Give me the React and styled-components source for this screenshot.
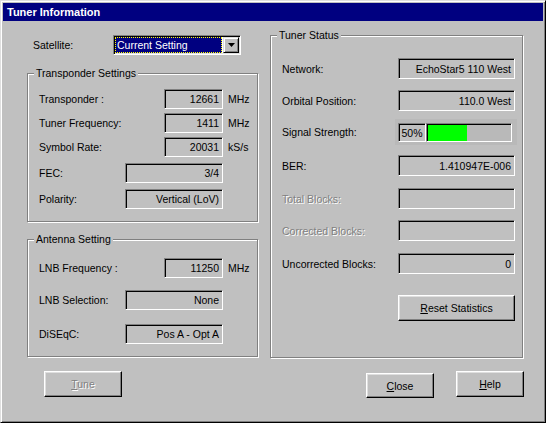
import styled, { createGlobalStyle } from "styled-components";

const GlobalStyle = createGlobalStyle`
  html, body {
    margin: 0;
    padding: 0;
    background: #c0c0c0;
  }
  body {
    font-family: "Liberation Sans", Arial, sans-serif;
    font-size: 10.5px;
    color: #000;
  }
`;

const transponderRows = [
  { label: "Transponder :", value: "12661", unit: "MHz", w: 59, mt: 15 },
  { label: "Tuner Frequency:", value: "1411", unit: "MHz", w: 59, mt: 4 },
  { label: "Symbol Rate:", value: "20031", unit: "kS/s", w: 59, mt: 4 },
  { label: "FEC:", value: "3/4", w: 98, mt: 6 },
  { label: "Polarity:", value: "Vertical (LoV)", w: 98, mt: 6 },
];

const antennaRows = [
  { label: "LNB Frequency :", value: "11250", unit: "MHz", w: 59, mt: 18 },
  { label: "LNB Selection:", value: "None", w: 98, mt: 12 },
  { label: "DiSEqC:", value: "Pos A - Opt A", w: 98, mt: 14 },
];

const Window = styled.div`
  width: 546px;
  height: 423px;
  box-sizing: border-box;
  background: #c0c0c0;
  border: 1px solid;
  border-color: #dfdfdf #000 #000 #dfdfdf;
  box-shadow: inset 1px 1px #fff, inset -1px -1px #808080;
  padding: 2px;
  display: flex;
  flex-direction: column;
`;

const TitleBar = styled.div`
  height: 18px;
  flex-shrink: 0;
  background: #000080;
  color: #fff;
  font-weight: bold;
  font-size: 11px;
  padding-left: 4px;
  display: flex;
  align-items: center;
`;

const Body = styled.div`
  display: flex;
  gap: 12px;
  padding: 14px 0 0 24px;
`;

const Column = styled.div`
  width: ${(p) => p.$w}px;
  display: flex;
  flex-direction: column;
`;

const SatelliteRow = styled.div`
  height: 20px;
  display: flex;
  align-items: center;
  margin-left: 6px;
`;

const SatLabel = styled.span`
  width: 80px;
`;

const Combo = styled.div`
  box-sizing: border-box;
  width: 128px;
  height: 20px;
  border: 1px solid;
  border-color: #808080 #fff #fff #808080;
  box-shadow: inset 1px 1px #000, inset -1px -1px #dfdfdf;
  background: #fff;
  padding: 1px;
  display: flex;
`;

const ComboText = styled.div`
  flex: 1;
  background: #000080;
  color: #fff;
  outline: 1px dotted #ffff00;
  outline-offset: -1px;
  padding-left: 2px;
  display: flex;
  align-items: center;
`;

const ComboButton = styled.div`
  box-sizing: border-box;
  width: 16px;
  height: 16px;
  margin-left: 1px;
  background: #c0c0c0;
  border: 1px solid;
  border-color: #dfdfdf #000 #000 #dfdfdf;
  box-shadow: inset 1px 1px #fff, inset -1px -1px #808080;
  display: flex;
  align-items: center;
  justify-content: center;
`;

const Group = styled.div`
  position: relative;
  box-sizing: border-box;
  height: ${(p) => p.$h}px;
  margin-top: ${(p) => p.$mt || 0}px;
  border: 1px solid #808080;
  box-shadow: inset 1px 1px #fff, 1px 1px #fff;
  padding: 0 ${(p) => p.$pr || 0}px 0 11px;
  display: flex;
  flex-direction: column;
`;

const Legend = styled.span`
  position: absolute;
  top: -7px;
  left: 6px;
  padding: 0 2px;
  line-height: 13px;
  background: #c0c0c0;
`;

const Row = styled.div`
  display: grid;
  grid-template-columns: ${(p) => (p.$unit ? "1fr auto 34px" : "1fr auto")};
  align-items: center;
  margin-top: ${(p) => p.$mt}px;
`;

const Label = styled.span`
  white-space: nowrap;
  color: ${(p) => (p.$disabled ? "#808080" : "#000")};
  text-shadow: ${(p) => (p.$disabled ? "1px 1px #fff" : "none")};
`;

const Unit = styled.span`
  padding-left: 5px;
`;

const Field = styled.div`
  box-sizing: border-box;
  width: ${(p) => p.$w}px;
  height: ${(p) => p.$h || 20}px;
  border: 1px solid;
  border-color: #808080 #fff #fff #808080;
  box-shadow: inset 1px 1px #000;
  padding-right: 3px;
  display: flex;
  align-items: center;
  justify-content: flex-end;
  white-space: nowrap;
`;

const SignalPanel = styled.div`
  justify-self: end;
  margin-right: -2px;
  box-sizing: border-box;
  width: 122px;
  height: 26px;
  background: #b9b9b9;
  padding: 4px 5px 3px 3px;
  display: flex;
`;

const Percent = styled(Field)`
  justify-content: center;
  padding: 0;
  background: #c0c0c0;
`;

const Bar = styled.div`
  box-sizing: border-box;
  flex: 1;
  height: 19px;
  border: 1px solid;
  border-color: #808080 #fff #fff #808080;
  box-shadow: inset 1px 1px #000;
  padding: 1px 0 0 1px;
  display: flex;
`;

const BarFill = styled.div`
  height: 100%;
  background: #00ff00;
`;

const Button = styled.button`
  box-sizing: border-box;
  width: ${(p) => p.$w}px;
  height: ${(p) => p.$h || 26}px;
  margin: ${(p) => p.$mt || 0}px 0 0 ${(p) => p.$ml || 0}px;
  padding: 0;
  background: #c0c0c0;
  border: 1px solid;
  border-color: #fff #000 #000 #fff;
  box-shadow: inset -1px -1px #808080, inset 1px 1px #dfdfdf;
  font: inherit;
  color: #000;

  &:disabled {
    color: #808080;
    text-shadow: 1px 1px #fff;
  }
`;

const ButtonRow = styled.div`
  display: flex;
  align-items: flex-start;
  justify-content: ${(p) => (p.$end ? "flex-end" : "flex-start")};
  gap: 22px;
  margin-top: ${(p) => p.$mt}px;
  margin-right: ${(p) => (p.$end ? -1 : 0)}px;
`;

const FieldRows = ({ rows }) =>
  rows.map((r) => (
    <Row key={r.label} $mt={r.mt} $unit>
      <Label>{r.label}</Label>
      <Field $w={r.w}>{r.value}</Field>
      <Unit>{r.unit}</Unit>
    </Row>
  ));

const App = () => {
  const signal = 50;
  return (
    <>
      <GlobalStyle />
      <Window>
        <TitleBar>Tuner Information</TitleBar>
        <Body>
          <Column $w={231}>
            <SatelliteRow>
              <SatLabel>Satellite:</SatLabel>
              <Combo>
                <ComboText>Current Setting</ComboText>
                <ComboButton>
                  <svg width="7" height="4" viewBox="0 0 7 4">
                    <path d="M0 0h7L3.5 4z" fill="#000" />
                  </svg>
                </ComboButton>
              </Combo>
            </SatelliteRow>

            <Group $h={149} $mt={18}>
              <Legend>Transponder Settings</Legend>
              <FieldRows rows={transponderRows} />
            </Group>

            <Group $h={118} $mt={17}>
              <Legend>Antenna Setting</Legend>
              <FieldRows rows={antennaRows} />
            </Group>

            <ButtonRow $mt={14}>
              <Button $w={78} $ml={17} disabled>
                <u>T</u>une
              </Button>
            </ButtonRow>
          </Column>

          <Column $w={253}>
            <Group $h={323} $pr={7}>
              <Legend>Tuner Status</Legend>
              <Row $mt={22}>
                <Label>Network:</Label>
                <Field $w={117} $h={21}>EchoStar5 110 West</Field>
              </Row>
              <Row $mt={11}>
                <Label>Orbital Position:</Label>
                <Field $w={117} $h={21}>110.0 West</Field>
              </Row>
              <Row $mt={8}>
                <Label>Signal Strength:</Label>
                <SignalPanel>
                  <Percent $w={28} $h={19}>{signal}%</Percent>
                  <Bar>
                    <BarFill style={{ width: `${signal * 0.93}%` }} />
                  </Bar>
                </SignalPanel>
              </Row>
              <Row $mt={10}>
                <Label>BER:</Label>
                <Field $w={117} $h={21}>1.410947E-006</Field>
              </Row>
              <Row $mt={12}>
                <Label $disabled>Total Blocks:</Label>
                <Field $w={117} $h={21} />
              </Row>
              <Row $mt={11}>
                <Label $disabled>Corrected Blocks:</Label>
                <Field $w={117} $h={21} />
              </Row>
              <Row $mt={12}>
                <Label>Uncorrected Blocks:</Label>
                <Field $w={117} $h={21}>0</Field>
              </Row>
              <Row $mt={21}>
                <span />
                <Button $w={117}>
                  <u>R</u>eset Statistics
                </Button>
              </Row>
            </Group>

            <ButtonRow $mt={13} $end>
              <Button $w={68} $h={25} $mt={2}>
                <u>C</u>lose
              </Button>
              <Button $w={68}>
                <u>H</u>elp
              </Button>
            </ButtonRow>
          </Column>
        </Body>
      </Window>
    </>
  );
};

export default App;
